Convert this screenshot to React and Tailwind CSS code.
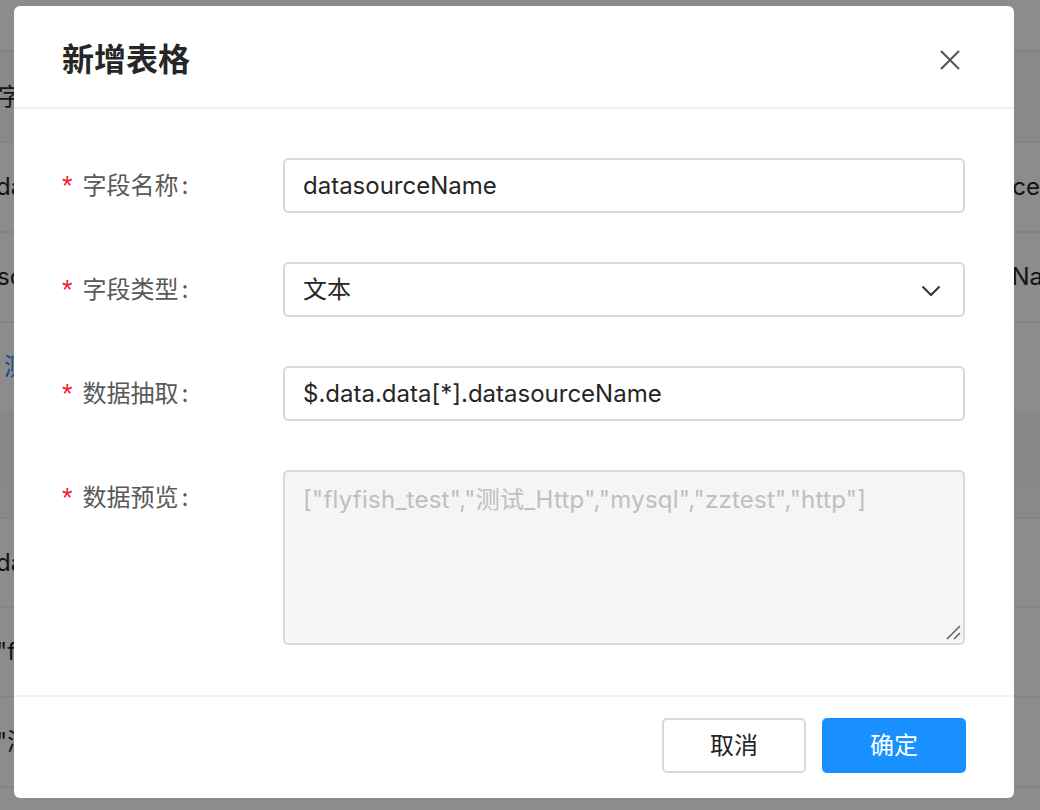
import React from "react";

const FONT = { fontFamily: '"Inter", "Noto Sans CJK SC", sans-serif' };

function BgRow({ h, left, right, leftClass = "", rightClass = "", bg = "", border = true }) {
  return (
    <div
      className={`flex items-center justify-between overflow-hidden whitespace-nowrap text-[24px] text-[#262626] ${bg} ${border ? "border-b-2 border-[#f0f0f0]" : ""}`}
      style={{ height: h }}
    >
      <span className={leftClass}>{left}</span>
      <span className={rightClass}>{right}</span>
    </div>
  );
}

function Label({ text }) {
  return (
    <div className="w-[221px] shrink-0 h-[55px] flex items-center text-[24px] text-[#595959]">
      <span
        className="text-[#f5222d] mr-[10px] text-[27px] leading-none mt-[2px]"
        style={{ fontFamily: '"Liberation Sans", sans-serif' }}
      >
        *
      </span>
      <span>{text}</span>
      <span className="ml-[3px]">:</span>
    </div>
  );
}

export default function App() {
  return (
    <div className="relative w-[1040px] h-[810px] overflow-hidden bg-white" style={FONT}>
      {/* background page */}
      <div className="flex flex-col">
        <BgRow h={52} left="" right="" />
        <BgRow h={91} left="字段名称" right="" bg="bg-[#fafafa]" leftClass="ml-[-2px]" />
        <BgRow h={90} left="datasourceName" right="datasource" leftClass="ml-[-4px]" rightClass="mr-[0px]" />
        <BgRow h={90} left="sourceName" right="datasourceName" leftClass="ml-[-3px]" rightClass="mr-[-38px]" />
        <BgRow h={87} left="测试" right="" leftClass="ml-[4px] text-[#1890ff]" border={false} />
        <div className="h-[77px] bg-[#f7f7f7]" />
        <BgRow h={32} left="" right="" bg="bg-[#fafafa]" />
        <BgRow h={89} left="datasourceName" right="" leftClass="ml-[-4px]" />
        <BgRow h={90} left={'"flyfish_test"'} right="" leftClass="ml-[-4px]" />
        <BgRow h={90} left={'"测试_Http"'} right="" leftClass="ml-[-4px]" />
      </div>

      {/* mask */}
      <div className="absolute inset-0 bg-black/45" />

      {/* modal */}
      <div className="absolute left-[14px] top-[6px] w-[1000px] h-[792px] bg-white rounded-[6px] flex flex-col overflow-hidden">
        {/* header */}
        <div className="h-[103px] shrink-0 border-b-2 border-[#f0f0f0] flex items-start justify-between px-[48px] pt-[32px]">
          <div className="text-[32px] leading-[44px] font-bold text-[#262626]">新增表格</div>
          <svg width="20" height="20" viewBox="0 0 20 20" className="mt-[12px] mr-[6px]">
            <path d="M1 1 L19 19 M19 1 L1 19" stroke="#5a5a5a" strokeWidth="2.2" fill="none" />
          </svg>
        </div>

        {/* body */}
        <div className="flex-1 flex flex-col gap-[49px] pl-[48px] pr-[49px] pt-[49px]">
          <div className="flex">
            <Label text="字段名称" />
            <div className="flex-1 h-[55px] border-2 border-[#d9d9d9] rounded-[5px] flex items-center pl-[18px] text-[24px] text-[#262626]">
              datasourceName
            </div>
          </div>
          <div className="flex">
            <Label text="字段类型" />
            <div className="flex-1 h-[55px] border-2 border-[#d9d9d9] rounded-[5px] flex items-center justify-between pl-[18px] pr-[22px] text-[24px] text-[#262626]">
              <span>文本</span>
              <svg width="20" height="12" viewBox="0 0 20 12" className="mt-[2px]">
                <path d="M1.5 1.5 L10 10 L18.5 1.5" stroke="#333" strokeWidth="2" fill="none" />
              </svg>
            </div>
          </div>
          <div className="flex">
            <Label text="数据抽取" />
            <div className="flex-1 h-[55px] border-2 border-[#d9d9d9] rounded-[5px] flex items-center pl-[18px] text-[24px] text-[#262626]">
              $.data.data[*].datasourceName
            </div>
          </div>
          <div className="flex">
            <Label text="数据预览" />
            <div className="relative flex-1 h-[175px] border-2 border-[#d9d9d9] rounded-[5px] bg-[#f5f5f5] pl-[18px] pt-[10px] text-[24px] leading-[36px] tracking-[0.25px] text-[#bfbfbf]">
              ["flyfish_test","测试_Http","mysql","zztest","http"]
              <svg width="18" height="18" viewBox="0 0 18 18" className="absolute right-[1px] bottom-[1px]">
                <path d="M16 2 L3 15 M16 9 L10 15" stroke="#666" strokeWidth="1.6" fill="none" />
              </svg>
            </div>
          </div>
        </div>

        {/* footer */}
        <div className="shrink-0 border-t-2 border-[#f0f0f0] flex justify-end gap-[16px] px-[48px] pt-[21px] pb-[25px]">
          <button className="w-[144px] h-[55px] border-2 border-[#d9d9d9] rounded-[5px] bg-white text-[24px] text-[#262626]">
            取消
          </button>
          <button className="w-[144px] h-[55px] rounded-[5px] bg-[#1890ff] text-[24px] text-white">
            确定
          </button>
        </div>
      </div>
    </div>
  );
}
